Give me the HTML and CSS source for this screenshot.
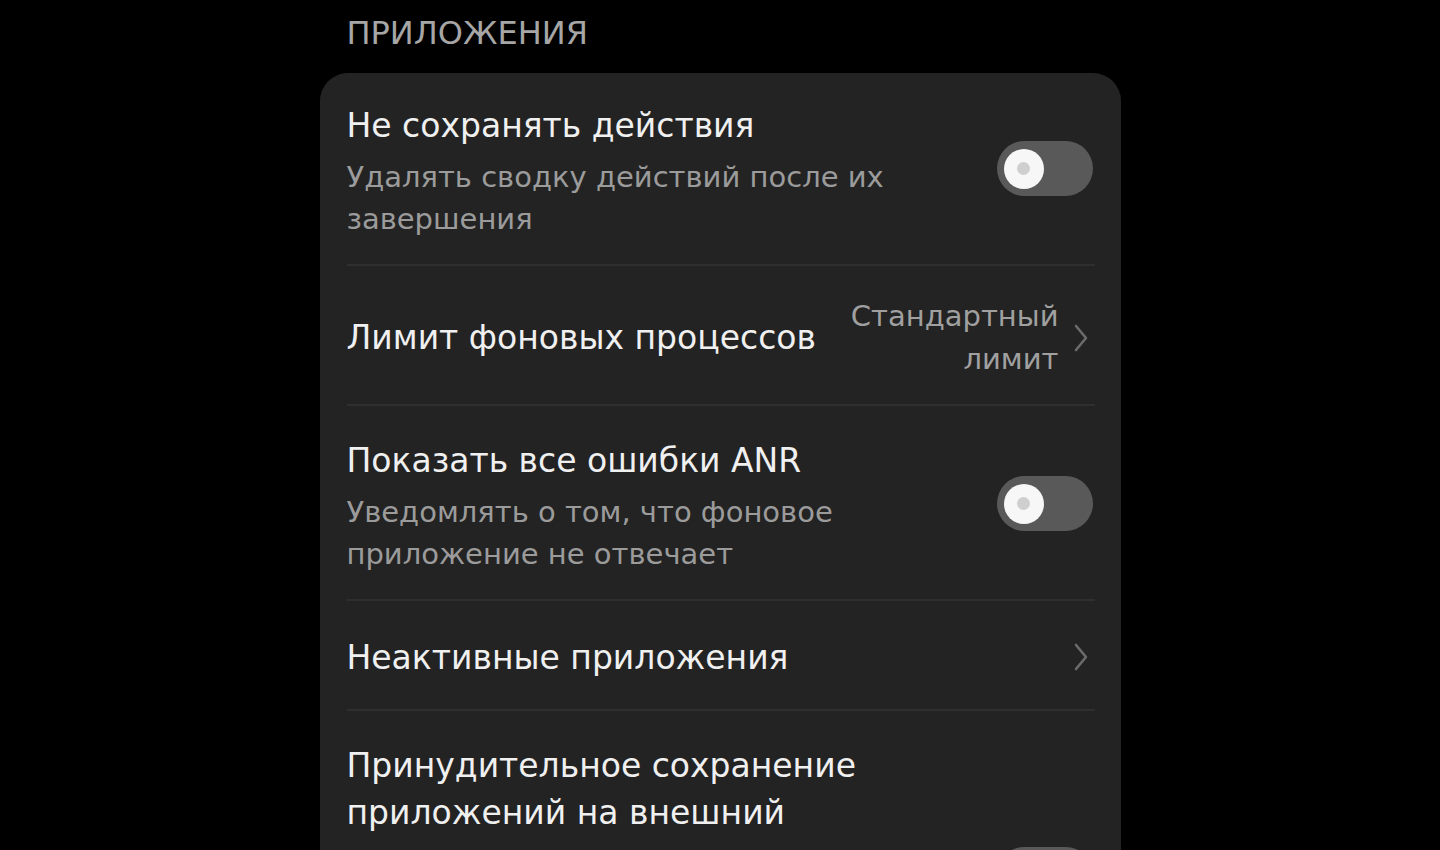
FILE: index.html
```html
<!DOCTYPE html>
<html lang="ru">
<head>
<meta charset="utf-8">
<title>Приложения</title>
<link rel="stylesheet" href="styles.css">
</head>
<body>
<div class="page">
  <div class="section-title">ПРИЛОЖЕНИЯ</div>
  <div class="card">
    <div class="row row-toggle">
      <div class="texts">
        <div class="title">Не сохранять действия</div>
        <div class="sub">Удалять сводку действий после их<br>завершения</div>
      </div>
      <div class="toggle"><div class="knob"></div></div>
    </div>
    <div class="row row-value">
      <div class="texts">
        <div class="title">Лимит фоновых процессов</div>
      </div>
      <div class="value">Стандартный<br>лимит</div>
      <svg class="chev" width="16" height="32" viewBox="0 0 16 32"><path d="M3 4 L13 16 L3 28" fill="none" stroke="#6b6b6b" stroke-width="2.6" stroke-linecap="round" stroke-linejoin="round"/></svg>
    </div>
    <div class="row row-toggle row-anr">
      <div class="texts">
        <div class="title">Показать все ошибки ANR</div>
        <div class="sub">Уведомлять о том, что фоновое<br>приложение не отвечает</div>
      </div>
      <div class="toggle"><div class="knob"></div></div>
    </div>
    <div class="row row-simple">
      <div class="texts">
        <div class="title">Неактивные приложения</div>
      </div>
      <svg class="chev" width="16" height="32" viewBox="0 0 16 32"><path d="M3 4 L13 16 L3 28" fill="none" stroke="#6b6b6b" stroke-width="2.6" stroke-linecap="round" stroke-linejoin="round"/></svg>
    </div>
    <div class="row row-last">
      <div class="texts">
        <div class="title">Принудительное сохранение<br>приложений на внешний<br>накопитель</div>
      </div>
      <div class="toggle toggle-last"><div class="knob"></div></div>
    </div>
  </div>
</div>
</body>
</html>
```
FILE: styles.css
```css
html, body {
  margin: 0;
  padding: 0;
  background: #000;
  height: 100%;
  overflow: hidden;
}
body {
  font-family: "DejaVu Sans", "Noto Sans", sans-serif;
  color: #efefef;
}
.page {
  width: 801px;
  margin: 0 auto;
}
.section-title {
  font-size: 32px;
  line-height: 40px;
  color: #a6a6a6;
  padding: 13px 0 0 27px;
  margin-bottom: 20px;
}
.card {
  background: #232323;
  border-radius: 28px;
  padding: 0 26px 0 27px;
}
.row {
  display: flex;
  align-items: center;
  border-bottom: 2px solid #2f2f2f;
}
.row-toggle {
  padding: 29px 0 24px;
}
.row-anr {
  padding-top: 31px;
}
.row-value {
  height: 138px;
  padding-top: 5px;
  box-sizing: border-box;
  height: 140px;
}
.row-simple {
  height: 110px;
  padding-top: 4px;
  box-sizing: border-box;
}
.row-last {
  border-bottom: none;
  padding-top: 31px;
  align-items: flex-start;
}
.texts {
  flex: 1;
  min-width: 0;
}
.title {
  font-size: 33px;
  line-height: 47px;
  color: #f0f0f0;
}
.sub {
  font-size: 29px;
  line-height: 42px;
  color: #9b9b9b;
  margin-top: 7px;
}
.value {
  font-size: 29px;
  line-height: 43px;
  color: #a0a0a0;
  text-align: right;
  margin-right: 14px;
}
.chev {
  flex: none;
  margin-right: 6px;
}
.toggle {
  flex: none;
  width: 96px;
  height: 55px;
  border-radius: 28px;
  background: #595959;
  display: flex;
  align-items: center;
  padding-left: 7px;
  box-sizing: border-box;
  margin: 0 2px 5px 0;
}
.knob {
  width: 40px;
  height: 40px;
  border-radius: 50%;
  background: #f7f7f7;
  display: flex;
  align-items: center;
  justify-content: center;
}
.knob::after {
  content: "";
  width: 13px;
  height: 13px;
  border-radius: 50%;
  background: #cfcfcf;
}
.toggle-last {
  margin-top: 105px;
}
```
